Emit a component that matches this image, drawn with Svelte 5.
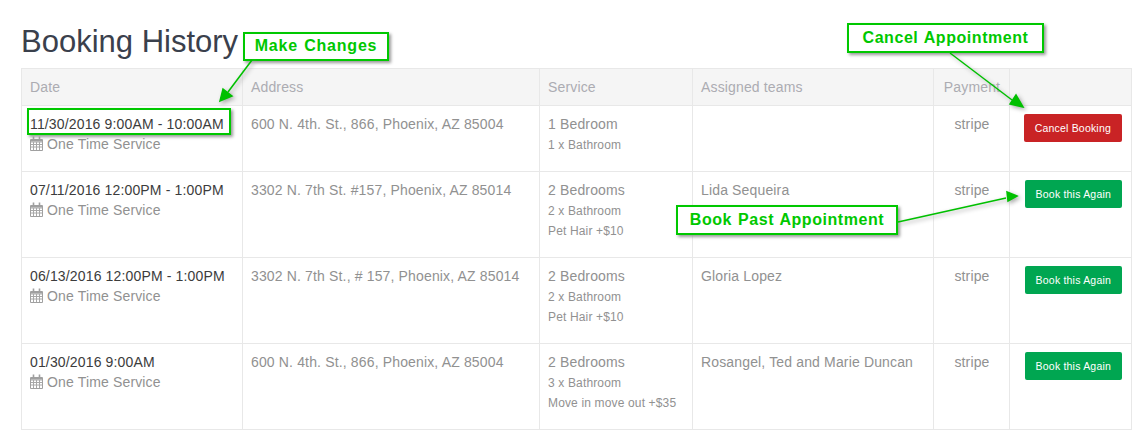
<script lang="ts">
  const bookings = [
    { date: '11/30/2016 9:00AM - 10:00AM', address: '600 N. 4th. St., 866, Phoenix, AZ 85004', service: '1 Bedroom', extras: ['1 x Bathroom'], team: '', action: 'Cancel Booking', cancel: true },
    { date: '07/11/2016 12:00PM - 1:00PM', address: '3302 N. 7th St. #157, Phoenix, AZ 85014', service: '2 Bedrooms', extras: ['2 x Bathroom', 'Pet Hair +$10'], team: 'Lida Sequeira', action: 'Book this Again', cancel: false },
    { date: '06/13/2016 12:00PM - 1:00PM', address: '3302 N. 7th St., # 157, Phoenix, AZ 85014', service: '2 Bedrooms', extras: ['2 x Bathroom', 'Pet Hair +$10'], team: 'Gloria Lopez', action: 'Book this Again', cancel: false },
    { date: '01/30/2016 9:00AM', address: '600 N. 4th. St., 866, Phoenix, AZ 85004', service: '2 Bedrooms', extras: ['3 x Bathroom', 'Move in move out +$35'], team: 'Rosangel, Ted and Marie Duncan', action: 'Book this Again', cancel: false }
  ];
</script>

<main>
  <h1>Booking History</h1>
  <table>
    <colgroup>
      <col style="width: 221px" />
      <col style="width: 297px" />
      <col style="width: 153px" />
      <col style="width: 241px" />
      <col style="width: 76px" />
      <col style="width: 122px" />
    </colgroup>
    <thead>
      <tr>
        <th>Date</th>
        <th>Address</th>
        <th>Service</th>
        <th>Assigned teams</th>
        <th class="center">Payment</th>
        <th></th>
      </tr>
    </thead>
    <tbody>
      {#each bookings as b}
        <tr>
          <td>
            <div class="date">{b.date}</div>
            <div class="kind">
              <svg class="cal" viewBox="0 0 13 15" width="13" height="15" aria-hidden="true">
                <path d="M.5 3.500h12v11H.5z" fill="#fff" stroke="#a0a0a0" />
                <path d="M1 6h11M1 8.500h11M1 11h11M3.500 6v8M6.500 6v8M9.500 6v8" stroke="#a8a8a8" fill="none" />
                <path d="M1 3h11v2.500H1z" fill="#a0a0a0" />
                <path d="M3.500 .5v3M9.500 .5v3" stroke="#a0a0a0" stroke-width="1.600" />
              </svg>
              One Time Service
            </div>
          </td>
          <td>{b.address}</td>
          <td>
            <div>{b.service}</div>
            {#each b.extras as extra}
              <div class="extra">{extra}</div>
            {/each}
          </td>
          <td>{b.team}</td>
          <td class="center">stripe</td>
          <td class="actions">
            <button class:cancel={b.cancel}>{b.action}</button>
          </td>
        </tr>
      {/each}
    </tbody>
  </table>

  <div class="focus"></div>
  <div class="note make">Make Changes</div>
  <div class="note cancel-note">Cancel Appointment</div>
  <div class="note past">Book Past Appointment</div>

  <svg class="arrows" width="1147" height="447" aria-hidden="true">
    <g stroke="#00c000" stroke-width="1.500" fill="#00c000">
      <path d="M252 60 228 92" />
      <path d="M220 101 223 89 232 96z" />
      <path d="M950 53 1012 100" />
      <path d="M1023 107 1010 104 1016 95z" />
      <path d="M898 222 1006 198" />
      <path d="M1017 196 1007 192 1008 201z" />
    </g>
  </svg>
</main>

<style>
  :global(body) {
    background: #fff;
  }

  main {
    position: relative;
    height: 447px;
    width: 1147px;
    overflow: hidden;
    padding: 23px 16px 0 21px;
    box-sizing: border-box;
    font-family: "Liberation Sans", Arial, sans-serif;
    font-size: 14px;
    line-height: 20px;
    letter-spacing: 0.15px;
    color: #919191;
  }

  h1 {
    margin: 0 0 7px;
    font-size: 31px;
    font-weight: 400;
    line-height: 38px;
    letter-spacing: 0;
    color: #3a404c;
  }

  table {
    table-layout: fixed;
    border-collapse: collapse;
    width: 1110px;
  }

  th,
  td {
    border: 1px solid #e8e8e8;
    padding: 8px;
    vertical-align: top;
    text-align: left;
    font-weight: 400;
  }

  th {
    height: 20px;
    background: #f5f5f5;
    color: #acacb2;
  }

  td {
    padding-bottom: 17px;
  }

  .center {
    text-align: center;
    padding-left: 5px;
    padding-right: 4px;
  }

  .date {
    color: #3c3c3c;
  }

  .kind {
    color: #919191;
  }

  .cal {
    vertical-align: -2px;
  }

  .extra {
    font-size: 12px;
    margin-top: 1px;
    margin-bottom: -1px;
  }

  .actions {
    text-align: right;
    padding-right: 9px;
  }

  button {
    height: 28px;
    padding: 0 11px;
    border: 0;
    border-radius: 2px;
    background: #00a651;
    color: #fff;
    font-family: inherit;
    font-size: 10.500px;
    letter-spacing: 0.2px;
    line-height: 14px;
  }

  button.cancel {
    background: #c92325;
  }

  .note {
    position: absolute;
    box-sizing: border-box;
    height: 30px;
    border: 2px solid #00c800;
    background: #fff;
    box-shadow: 2px 2px 3px #999;
    color: #00c800;
    font-size: 16px;
    font-weight: 700;
    line-height: 25px;
    letter-spacing: 0.55px;
    word-spacing: 1px;
    text-align: center;
  }

  .make {
    left: 243px;
    top: 32px;
    width: 146px;
    height: 29px;
    letter-spacing: 0.8px;
    line-height: 24px;
  }

  .cancel-note {
    left: 847px;
    top: 23px;
    width: 197px;
  }

  .past {
    left: 676px;
    top: 205px;
    width: 222px;
  }

  .focus {
    position: absolute;
    left: 27px;
    top: 108px;
    width: 204px;
    height: 27px;
    box-sizing: border-box;
    border: 2px solid #00c800;
    box-shadow: 2px 2px 3px #999;
  }

  .arrows {
    position: absolute;
    left: 0;
    top: 0;
    pointer-events: none;
    filter: drop-shadow(2px 2px 2px #aaa);
  }
</style>
